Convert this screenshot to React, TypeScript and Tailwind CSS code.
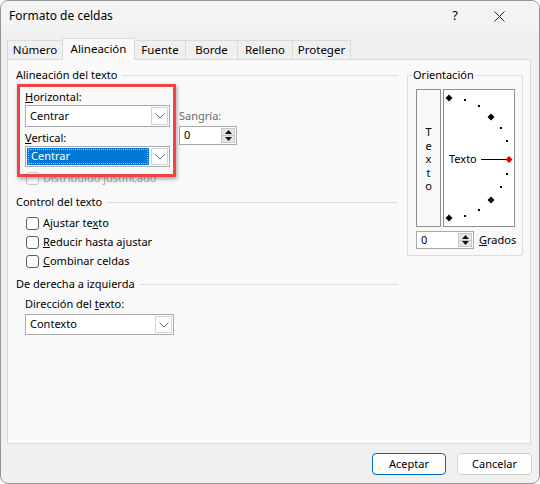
import React from "react"

function Chevron() {
  return (
    <svg width="10" height="6" viewBox="0 0 10 6">
      <path d="M0.5 0.5 L5 5 L9.5 0.5" fill="none" stroke="#6b6b6b" strokeWidth="1" />
    </svg>
  )
}

function Select({ value, className, selected }: { value: string; className: string; selected?: boolean }) {
  return (
    <div className={`flex border border-[#a9a9a9] bg-white ${className}`}>
      {selected ? (
        <div className="flex-1 m-px bg-[#0078d7] p-px">
          <div className="h-full border border-dotted border-[#9cc6ee] flex items-center pl-[2px] text-white">{value}</div>
        </div>
      ) : (
        <div className="flex-1 flex items-center pl-[4px]">{value}</div>
      )}
      <div className="m-px w-[17px] border border-[#d4d4d4] flex items-center justify-center">
        <Chevron />
      </div>
    </div>
  )
}

function Spin({ className }: { className: string }) {
  return (
    <div className={`flex border border-[#a9a9a9] bg-white ${className}`}>
      <div className="flex-1 flex items-center pl-[4px]">0</div>
      <div className="m-px w-[14px] flex flex-col bg-[#e6e6e6] border border-[#c9c9c9]">
        <div className="flex-1 flex items-center justify-center border-b border-[#c9c9c9]">
          <svg width="7" height="4" viewBox="0 0 7 4">
            <path d="M0 4 L3.5 0 L7 4 Z" fill="#111" />
          </svg>
        </div>
        <div className="flex-1 flex items-center justify-center">
          <svg width="7" height="4" viewBox="0 0 7 4">
            <path d="M0 0 L3.5 4 L7 0 Z" fill="#111" />
          </svg>
        </div>
      </div>
    </div>
  )
}

function GroupHeader({ title }: { title: string }) {
  return (
    <div className="flex items-center h-[16px]">
      <span>{title}</span>
      <div className="flex-1 ml-[5px] h-px bg-[#dcdcdc]" />
    </div>
  )
}

function Check({ children, disabled }: { children: React.ReactNode; disabled?: boolean }) {
  return (
    <div className={`flex items-center h-[19px] ml-[10px] ${disabled ? "text-[#a6a6a6]" : ""}`}>
      <span
        className={`w-[13px] h-[13px] rounded-[3px] border bg-white ${
          disabled ? "border-[#c8c8c8]" : "border-[#5f5f5f]"
        }`}
      />
      <span className="ml-[4px]">{children}</span>
    </div>
  )
}

const tabs = [
  { name: "Número", w: "w-[56px]" },
  { name: "Alineación", w: "w-[73px]", active: true },
  { name: "Fuente", w: "w-[52px]" },
  { name: "Borde", w: "w-[53px]" },
  { name: "Relleno", w: "w-[56px]" },
  { name: "Proteger", w: "w-[59px]" },
]

const diamonds = [
  [5, 8],
  [47, 27],
  [47, 110],
  [5, 128],
]
const dots = [
  [21, 10],
  [35, 16],
  [57, 38],
  [63, 51],
  [63, 84],
  [57, 97],
  [35, 120],
  [21, 126],
]

function Dial() {
  return (
    <div className="w-[72px] h-[138px] border border-[#8f8f8f] bg-white">
      <div className="relative w-[70px] h-[136px]">
        <svg className="absolute inset-0" width="70" height="136" viewBox="0 0 70 136">
          {diamonds.map(([x, y], i) => (
            <path key={i} d={`M${x} ${y - 3.5} L${x + 3.5} ${y} L${x} ${y + 3.5} L${x - 3.5} ${y} Z`} fill="#000" />
          ))}
          {dots.map(([x, y], i) => (
            <rect key={i} x={x - 1} y={y - 1} width="2" height="2" fill="#000" />
          ))}
          <line x1="37" y1="69.5" x2="62" y2="69.5" stroke="#000" strokeWidth="1" />
          <path d="M65 66 L68.5 69.5 L65 73 L61.5 69.5 Z" fill="#e00000" />
        </svg>
        <span className="absolute left-[5px] top-[61px] leading-[16px]">Texto</span>
      </div>
    </div>
  )
}

export default function App() {
  return (
    <div className="w-[540px] h-[484px] bg-[#f0f0f0] rounded-[8px] border border-[#959595] overflow-hidden flex flex-col text-[11px] text-black font-['Segoe_UI','Noto_Sans',sans-serif]">
      {/* barra de título */}
      <div className="h-[30px] bg-[#f3f3f3] flex items-center pl-[8px] shrink-0">
        <span className="flex-1 text-[12px]">Formato de celdas</span>
        <span className="w-[20px] text-center mr-[29px] text-[13px]">?</span>
        <svg className="mr-[34px]" width="11" height="11" viewBox="0 0 11 11">
          <path d="M0.5 0.5 L10.5 10.5 M10.5 0.5 L0.5 10.5" stroke="#222" strokeWidth="1" />
        </svg>
      </div>

      {/* pestañas */}
      <div className="h-[28px] flex items-end pl-[6px] shrink-0 text-[11.5px]">
        {tabs.map((t, i) => (
          <div
            key={t.name}
            className={`${t.w} ${i > 0 ? "-ml-px" : ""} flex items-center justify-center border-t border-l border-r ${
              t.active
                ? "h-[22px] -mb-px relative z-10 bg-[#f9f9f9] border-[#d9d9d9] pb-[2px]"
                : "h-[19px] bg-[#f0f0f0] border-[#dadada]"
            }`}
          >
            {t.name}
          </div>
        ))}
      </div>

      {/* panel */}
      <div className="h-[385px] ml-[6px] mr-[8px] border border-[#dadada] bg-[#f9f9f9] shrink-0 flex pt-[7px]">
        {/* columna izquierda */}
        <div className="w-[382px] ml-[8px] flex flex-col">
          <GroupHeader title="Alineación del texto" />
          <div className="relative">
            <div className="flex ml-[9px] mt-[6px]">
              <div className="w-[145px] flex flex-col">
                <div className="h-[16px] leading-[16px]">
                  <u>H</u>orizontal:
                </div>
                <Select value="Centrar" className="h-[22px]" />
                <div className="h-[16px] leading-[16px] mt-[3px]">
                  <u>V</u>ertical:
                </div>
                <Select value="Centrar" className="h-[21px]" selected />
              </div>
              <div className="ml-[9px] pt-[19px] flex flex-col">
                <div className="h-[16px] leading-[16px] text-[#6d6d6d]">Sangría:</div>
                <Spin className="mt-[2px] h-[19px] w-[58px]" />
              </div>
            </div>
            <div className="mt-[2px]">
              <Check disabled>Distribuido justificado</Check>
            </div>
            <div className="absolute left-[1px] top-[1px] w-[159px] h-[93px] border-[3px] border-[#ef4444] shadow-[1px_2px_4px_rgba(0,0,0,0.35)]" />
          </div>

          <div className="mt-[6px]">
            <GroupHeader title="Control del texto" />
          </div>
          <div className="mt-[4px] flex flex-col">
            <Check>
              Ajustar te<u>x</u>to
            </Check>
            <Check>
              <u>R</u>educir hasta ajustar
            </Check>
            <Check>
              <u>C</u>ombinar celdas
            </Check>
          </div>

          <div className="mt-[5px]">
            <GroupHeader title="De derecha a izquierda" />
          </div>
          <div className="ml-[9px] mt-[4px] h-[16px] leading-[16px]">
            Dirección del <u>t</u>exto:
          </div>
          <Select value="Contexto" className="ml-[9px] mt-[2px] h-[21px] w-[149px]" />
        </div>

        {/* columna derecha */}
        <fieldset className="ml-[9px] w-[116px] self-start border border-[#dcdcdc] rounded-[2px] pl-[8px] pt-[6px] pb-[6px]">
          <legend className="-ml-[4px] px-[1px] leading-[16px]">Orientación</legend>
          <div className="flex gap-[2px]">
            <div className="w-[25px] h-[138px] border border-[#8f8f8f] flex items-center justify-center">
              <span className="[writing-mode:vertical-lr] [text-orientation:upright] tracking-[-1.5px] leading-[11px]">
                Texto
              </span>
            </div>
            <Dial />
          </div>
          <div className="flex items-center mt-[4px]">
            <Spin className="h-[18px] w-[58px]" />
            <span className="ml-[5px]">
              <u>G</u>rados
            </span>
          </div>
        </fieldset>
      </div>

      {/* botones */}
      <div className="flex justify-end gap-[11px] pr-[7px] pt-[9px]">
        <button className="w-[74px] h-[22px] rounded-[4px] border border-[#0067c0] bg-[#fdfdfd] flex items-center justify-center">
          Aceptar
        </button>
        <button className="w-[75px] h-[22px] rounded-[4px] border border-[#d0d0d0] bg-[#fdfdfd] flex items-center justify-center">
          Cancelar
        </button>
      </div>
    </div>
  )
}
